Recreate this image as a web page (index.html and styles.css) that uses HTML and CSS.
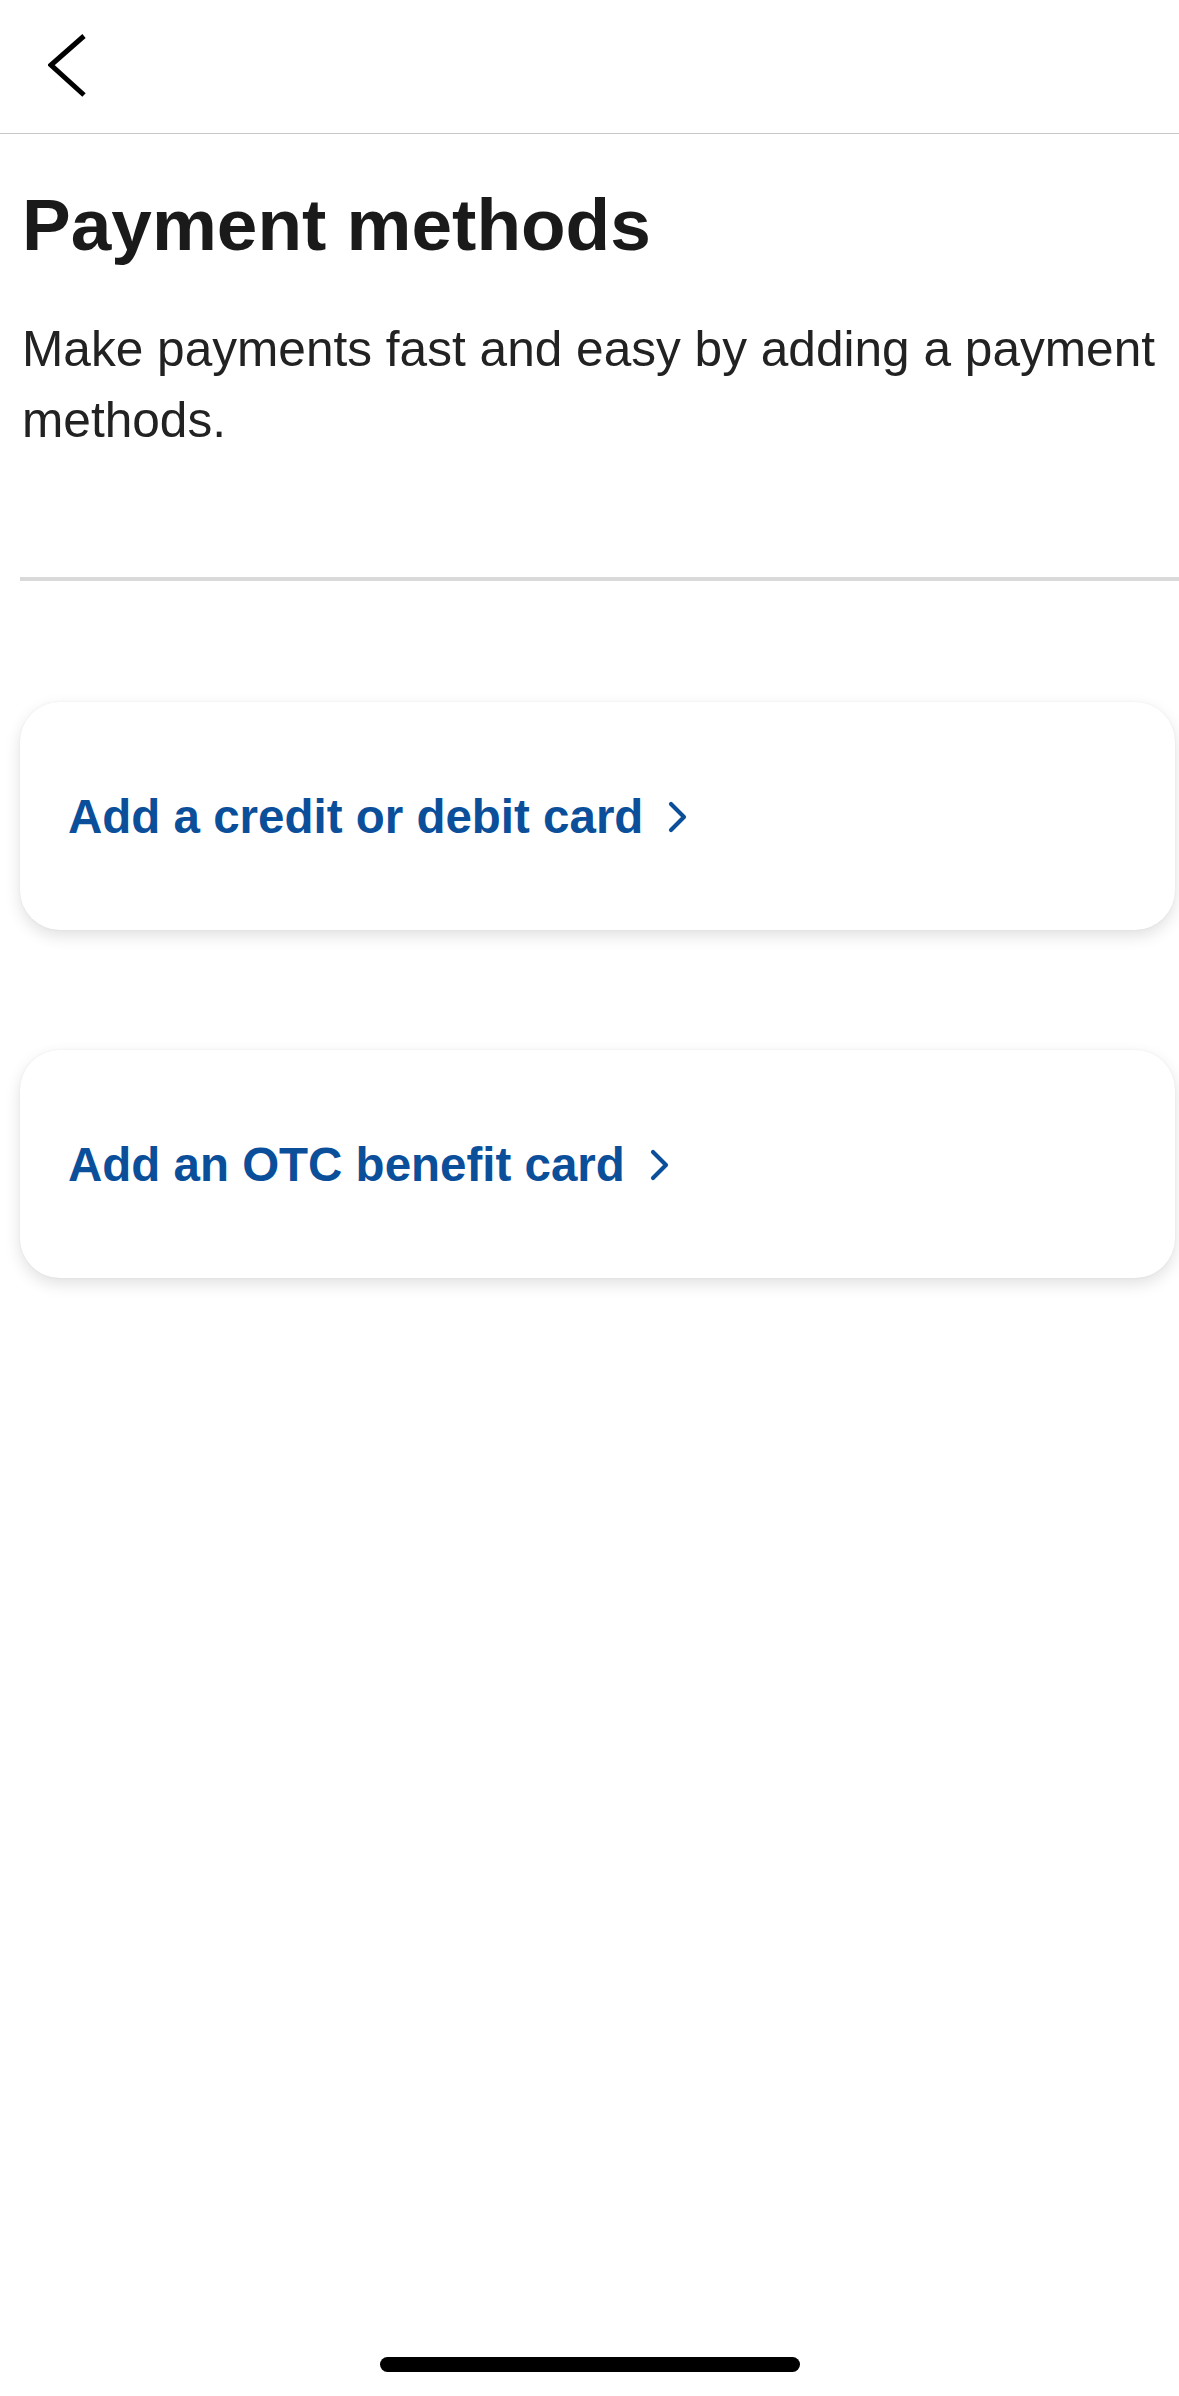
FILE: index.html
```html
<html lang="en">
<head>
    <meta charset="UTF-8">
    <meta name="viewport" content="width=device-width, initial-scale=1.0">
    <title>Payment methods</title>
    <link rel="stylesheet" href="styles.css">
</head>
<body>
    <div class="topbar">
        <a class="back" href="#" aria-label="Back">
            <svg width="40" height="66" viewBox="0 0 40 66">
                <polyline points="36,4 3,33 36,63" fill="none" stroke="#000" stroke-width="5" stroke-linejoin="miter"/>
            </svg>
        </a>
    </div>
    <div class="content">
        <h1 class="title">Payment methods</h1>
        <p class="intro">Make payments fast and easy by adding a payment methods.</p>
    </div>
    <div class="divider"></div>
    <div class="cards">
        <a class="card" href="#">
            <span>Add a credit or debit card</span>
            <svg class="arrow" width="28" height="36" viewBox="0 0 28 36">
                <polyline points="7,5 20,18 7,31" fill="none" stroke="#0b4f9b" stroke-width="4.2" stroke-linecap="round" stroke-linejoin="round"/>
            </svg>
        </a>
        <a class="card" href="#">
            <span>Add an OTC benefit card</span>
            <svg class="arrow" width="28" height="36" viewBox="0 0 28 36">
                <polyline points="7,5 20,18 7,31" fill="none" stroke="#0b4f9b" stroke-width="4.2" stroke-linecap="round" stroke-linejoin="round"/>
            </svg>
        </a>
    </div>
    <div class="home-bar"></div>
</body>
</html>
```

FILE: styles.css
```css
body {
    margin: 0;
    background: #fff;
    color: #1c1c1c;
    font-family: "Liberation Sans", Arial, sans-serif;
    min-height: 2396px;
    position: relative;
    overflow-x: hidden;
}
.topbar {
    height: 133px;
    border-bottom: 1px solid #c8c8c8;
    display: flex;
    align-items: flex-start;
}
.back {
    display: block;
    margin-top: 32px;
    margin-left: 48px;
    line-height: 0;
}
.content {
    padding: 0 18px 0 22px;
}
.title {
    font-size: 73px;
    line-height: 72px;
    font-weight: bold;
    margin: 55px 0 0 0;
    color: #1a1a1a;
}
.intro {
    font-size: 49.6px;
    line-height: 71px;
    margin: 53px 0 0 0;
    color: #222;
}
.divider {
    height: 4px;
    background: #d9d9d9;
    margin: 121px 0 0 20px;
}
.cards {
    display: flex;
    flex-direction: column;
    gap: 120px;
    padding: 121px 4px 0 20px;
}
.card {
    height: 228px;
    border-radius: 40px;
    background: #fff;
    box-shadow: 0 6px 16px rgba(0, 0, 0, 0.12), 0 0 3px rgba(0, 0, 0, 0.05);
    display: flex;
    align-items: center;
    padding-left: 48px;
    text-decoration: none;
    color: #0b4f9b;
    font-size: 47.5px;
    font-weight: bold;
}
.arrow {
    margin-left: 21px;
    margin-top: 2px;
}
.home-bar {
    position: absolute;
    bottom: 24px;
    left: 50%;
    transform: translateX(-50%);
    width: 420px;
    height: 15px;
    border-radius: 8px;
    background: #000;
}
```
